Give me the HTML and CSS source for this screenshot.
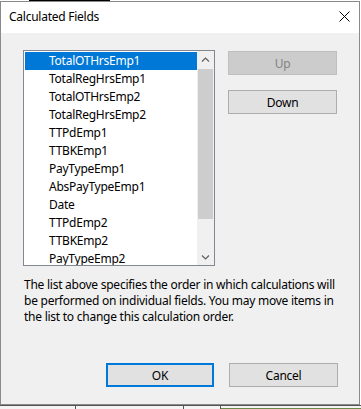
FILE: index.html
```html
<!DOCTYPE html>
<html>
<head>
	<title>Calculated Fields</title>
	<meta charset="utf-8">
	<meta name="viewport" content="width=device-width, initial-scale=1.0">
	<link rel="stylesheet" href="styles.css">
</head>
<body>

<div class="topstrip">
	<span class="gap"></span>
	<span class="dark"></span>
</div>

<div class="dialog">
	<div class="titlebar">
		<span class="title">Calculated Fields</span>
		<svg class="close" width="11" height="11" viewBox="0 0 11 11">
			<path d="M0.5 0.5 L10.5 10.5 M10.5 0.5 L0.5 10.5" stroke="#000" stroke-width="1" fill="none"/>
		</svg>
	</div>

	<div class="content">
		<div class="toprow">
			<div class="listbox">
				<ul class="items">
					<li class="selected">TotalOTHrsEmp1</li>
					<li>TotalRegHrsEmp1</li>
					<li>TotalOTHrsEmp2</li>
					<li>TotalRegHrsEmp2</li>
					<li>TTPdEmp1</li>
					<li>TTBKEmp1</li>
					<li>PayTypeEmp1</li>
					<li>AbsPayTypeEmp1</li>
					<li>Date</li>
					<li>TTPdEmp2</li>
					<li>TTBKEmp2</li>
					<li>PayTypeEmp2</li>
				</ul>
				<div class="scrollbar">
					<div class="arrow">
						<svg width="9" height="6" viewBox="0 0 9 6"><path d="M1 4.5 L4.5 1 L8 4.5" stroke="#606060" stroke-width="1.2" fill="none"/></svg>
					</div>
					<div class="track">
						<div class="thumb"></div>
					</div>
					<div class="arrow">
						<svg width="9" height="6" viewBox="0 0 9 6"><path d="M1 1.5 L4.5 5 L8 1.5" stroke="#606060" stroke-width="1.2" fill="none"/></svg>
					</div>
				</div>
			</div>
			<div class="side">
				<button class="btn" disabled>Up</button>
				<button class="btn">Down</button>
			</div>
		</div>

		<p class="note">The list above specifies the order in which calculations will be performed on individual fields. You may move items in the list to change this calculation order.</p>

		<div class="actions">
			<button class="btn default">OK</button>
			<button class="btn">Cancel</button>
		</div>
	</div>
</div>

<div class="bottomstrip">
	<span class="cell c1"></span>
	<span class="cell c2"></span>
	<span class="cell c3"></span>
	<span class="cell c4"></span>
</div>

</body>
</html>
```

FILE: styles.css
```css
body {
	margin: 0;
	background: #fff;
	font-family: "Noto Sans", "Open Sans", sans-serif;
	font-size: 12px;
	letter-spacing: -0.25px;
	color: #000;
}
.topstrip {
	display: flex;
	height: 1px;
}
.topstrip .gap {
	width: 29px;
}
.topstrip .dark {
	width: 81px;
	background: #000;
}
.dialog {
	width: 358px;
	height: 402px;
	border: 1px solid #8a8a8a;
	background: #f0f0f0;
	display: flex;
	flex-direction: column;
}
.titlebar {
	height: 31px;
	background: #fff;
	display: flex;
	align-items: center;
	justify-content: space-between;
	padding: 0 9px 0 8px;
}
.title {
	font-size: 12px;
	margin-top: -2px;
}
.close {
	display: block;
	margin-top: -2px;
}
.content {
	flex: 1;
	padding: 17px 21px 0 22px;
	display: flex;
	flex-direction: column;
}
.toprow {
	display: flex;
	gap: 13px;
}
.listbox {
	width: 190px;
	height: 214px;
	border: 1px solid #828790;
	background: #fff;
	display: flex;
	overflow: hidden;
}
.items {
	list-style: none;
	margin: 0;
	padding: 1px 0 0 1px;
	width: 172px;
}
.items li {
	height: 18px;
	line-height: 18px;
	padding-left: 24px;
	white-space: nowrap;
}
.items li.selected {
	background: #0078d7;
	color: #fff;
}
.scrollbar {
	width: 17px;
	background: #f0f0f0;
	display: flex;
	flex-direction: column;
}
.arrow {
	height: 17px;
	display: flex;
	align-items: center;
	justify-content: center;
}
.track {
	flex: 1;
	padding: 1px 1px 0;
}
.thumb {
	height: 150px;
	background: #cdcdcd;
}
.side {
	display: flex;
	flex-direction: column;
	gap: 15px;
	padding-top: 1px;
}
.btn {
	width: 109px;
	height: 24px;
	border: 1px solid #adadad;
	background: #e1e1e1;
	font-family: inherit;
	font-size: 12px;
	letter-spacing: inherit;
	color: #000;
	padding: 0;
}
.btn:disabled {
	background: #cccccc;
	border-color: #bfbfbf;
	color: #838383;
}
.btn.default {
	border: 2px solid #0078d7;
	width: 108px;
}
.note {
	margin: 11px 0 0 1px;
	line-height: 16px;
	width: 312px;
}
.actions {
	margin-top: auto;
	margin-bottom: 17px;
	display: flex;
	justify-content: flex-end;
	gap: 15px;
}
.bottomstrip {
	display: flex;
	height: 4px;
	border-top: 1px solid #555;
	background: #f4f4f4;
}
.cell {
	border-right: 1px solid #555;
}
.c1 { width: 75px; }
.c2 { width: 107px; }
.c3 { width: 36px; }
.c4 { flex: 1; border-right: 0; border-bottom: 2px solid #6a8a4a; }
```
